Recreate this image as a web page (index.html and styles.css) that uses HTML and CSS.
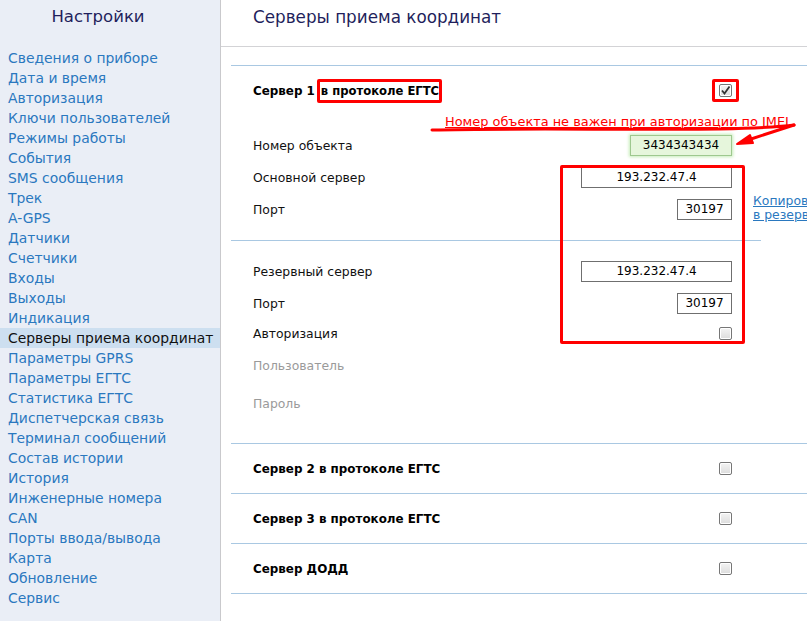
FILE: index.html
```html
<!DOCTYPE html>
<html lang="ru">
<head>
<meta charset="utf-8">
<title>Серверы приема координат</title>
<link rel="stylesheet" href="styles.css">
</head>
<body>
<div class="page">
  <aside class="sidebar">
    <div class="side-title">Настройки</div>
    <nav class="menu">
      <a class="menu-item">Сведения о приборе</a>
      <a class="menu-item">Дата и время</a>
      <a class="menu-item">Авторизация</a>
      <a class="menu-item">Ключи пользователей</a>
      <a class="menu-item">Режимы работы</a>
      <a class="menu-item">События</a>
      <a class="menu-item">SMS сообщения</a>
      <a class="menu-item">Трек</a>
      <a class="menu-item">A-GPS</a>
      <a class="menu-item">Датчики</a>
      <a class="menu-item">Счетчики</a>
      <a class="menu-item">Входы</a>
      <a class="menu-item">Выходы</a>
      <a class="menu-item">Индикация</a>
      <a class="menu-item active">Серверы приема координат</a>
      <a class="menu-item">Параметры GPRS</a>
      <a class="menu-item">Параметры ЕГТС</a>
      <a class="menu-item">Статистика ЕГТС</a>
      <a class="menu-item">Диспетчерская связь</a>
      <a class="menu-item">Терминал сообщений</a>
      <a class="menu-item">Состав истории</a>
      <a class="menu-item">История</a>
      <a class="menu-item">Инженерные номера</a>
      <a class="menu-item">CAN</a>
      <a class="menu-item">Порты ввода/вывода</a>
      <a class="menu-item">Карта</a>
      <a class="menu-item">Обновление</a>
      <a class="menu-item">Сервис</a>
    </nav>
  </aside>

  <main class="main">
    <header class="main-head">
      <h1 class="main-title">Серверы приема координат</h1>
    </header>

    <div class="content">
      <div class="servers">
        <section class="srv srv-open">
          <div class="row head">
            <span class="srv-name">Сервер 1<span class="mark">в протоколе ЕГТС</span></span>
            <span class="mark-box"><span class="cb checked"><svg viewBox="0 0 13 13" width="13" height="13"><path d="M3 6.5 L5.5 9.5 L10.5 2.5" fill="none" stroke="#333" stroke-width="1.8"/></svg></span></span>
          </div>

          <div class="group">
            <div class="rows">
              <div class="row">
                <span class="lbl">Номер объекта</span>
                <span class="inp inp-obj">3434343434</span>
              </div>
              <div class="row">
                <span class="lbl">Основной сервер</span>
                <span class="inp inp-ip">193.232.47.4</span>
              </div>
              <div class="row">
                <span class="lbl">Порт</span>
                <span class="inp inp-port">30197</span>
              </div>
            </div>
            <a class="copy-link">Копировать<br>в резервный</a>
          </div>

          <div class="inner-div"></div>

          <div class="group group-2">
            <div class="rows">
              <div class="row">
                <span class="lbl">Резервный сервер</span>
                <span class="inp inp-ip">193.232.47.4</span>
              </div>
              <div class="row">
                <span class="lbl">Порт</span>
                <span class="inp inp-port">30197</span>
              </div>
              <div class="row row-auth">
                <span class="lbl">Авторизация</span>
                <span class="cb"></span>
              </div>
              <div class="row row-user">
                <span class="lbl lbl-off">Пользователь</span>
              </div>
              <div class="row row-pass">
                <span class="lbl lbl-off">Пароль</span>
              </div>
            </div>
          </div>

          <div class="note">Номер объекта не важен при авторизации по IMEI</div>
          <svg class="note-arrow" width="380" height="40" viewBox="0 0 380 40">
            <path d="M2 19 C 80 17, 200 19, 290 18 C 330 17, 350 16, 364 14" fill="none" stroke="#f00" stroke-width="3" stroke-linecap="round"/>
            <path d="M364 14 L 318 29" fill="none" stroke="#f00" stroke-width="3" stroke-linecap="round"/>
            <path d="M307 33 L 320 24 L 323 32 Z" fill="#f00" stroke="#f00" stroke-width="2" stroke-linejoin="round"/>
          </svg>
          <div class="red-frame"></div>
        </section>

        <section class="srv">
          <div class="row head">
            <span class="srv-name">Сервер 2 в протоколе ЕГТС</span>
            <span class="cb"></span>
          </div>
        </section>

        <section class="srv">
          <div class="row head">
            <span class="srv-name">Сервер 3 в протоколе ЕГТС</span>
            <span class="cb"></span>
          </div>
        </section>

        <section class="srv">
          <div class="row head">
            <span class="srv-name">Сервер ДОДД</span>
            <span class="cb"></span>
          </div>
        </section>
      </div>
    </div>
  </main>
</div>
</body>
</html>
```

FILE: styles.css
```css
* { box-sizing: border-box; }

html, body {
  margin: 0;
  padding: 0;
  width: 807px;
  height: 621px;
  overflow: hidden;
  background: #fff;
  font-family: "DejaVu Sans", Verdana, sans-serif;
}

.page {
  display: flex;
  width: 807px;
  height: 621px;
}

/* Sidebar */
.sidebar {
  flex: 0 0 221px;
  width: 221px;
  background: #eaeef6;
  border-right: 1px solid #c9c9cc;
}

.side-title {
  padding: 7px 24px 0 0;
  line-height: 20px;
  height: 27px;
  margin-bottom: 21px;
  text-align: center;
  font-size: 16.5px;
  color: #1f1f5c;
}

.menu {
  display: flex;
  flex-direction: column;
}

.menu-item {
  display: block;
  height: 20px;
  line-height: 20px;
  padding-left: 8px;
  font-size: 13.9px;
  color: #2a78bf;
  white-space: nowrap;
  text-decoration: none;
}

.menu-item.active {
  background: #cddff0;
  color: #111;
}

/* Main */
.main {
  flex: 1;
  min-width: 0;
}

.main-head {
  height: 47px;
  padding: 7px 0 0 32px;
  border-bottom: 1px solid #d3d3d6;
}

.main-title {
  margin: 0;
  font-weight: normal;
  font-size: 16.8px;
  line-height: 20px;
  color: #1f1f5c;
}

.content {
  padding: 18px 0 0 10px;
}

.servers {
  border-bottom: 1px solid #a9c8e2;
}

.srv {
  position: relative;
  border-top: 1px solid #a9c8e2;
}

.row {
  display: flex;
  align-items: center;
  justify-content: space-between;
  width: 501px;
  height: 32px;
  padding-left: 22px;
  font-size: 12.4px;
  color: #111;
}

.row.head {
  height: 49px;
}

.srv-name {
  font-family: "DejaVu Sans", Verdana, sans-serif;
  font-weight: bold;
  font-size: 11.9px;
  color: #000;
}

.mark {
  display: inline-block;
  border: 3px solid #f00;
  border-radius: 2px;
  padding: 2px 0 2px 1px;
  margin-left: 2px;
  line-height: 14px;
  font-size: 11.6px;
}

.mark-box {
  display: inline-flex;
  border: 3px solid #f00;
  border-radius: 2px;
  padding: 2px 4px;
  margin-right: -7px;
}

.cb {
  display: inline-block;
  width: 13px;
  height: 13px;
  border: 1px solid #767676;
  border-radius: 2px;
  background: linear-gradient(#f4f4f4, #dcdcdc);
  box-shadow: inset 0 0 0 1px #fff;
}

.cb svg {
  display: block;
  margin: -1px;
}

.lbl-off {
  color: #9a9a9a;
}

.inp {
  display: inline-block;
  height: 21px;
  line-height: 19px;
  border: 1px solid #6f6f6f;
  background: #fff;
  text-align: center;
  font-size: 12px;
  color: #000;
}

.inp-obj {
  width: 102px;
  background: #e6f6dc;
  border-color: #9ec88f;
  box-shadow: 0 0 3px 1px #c6ecb8;
}

.inp-ip { width: 151px; }
.inp-port { width: 55px; }

.group {
  display: flex;
  margin-top: 14px;
}

.group-2 {
  margin-top: 14px;
  padding-bottom: 20px;
}

.row-auth { height: 28px; }
.row-user { height: 36px; }
.row-pass { height: 40px; }

.copy-link {
  align-self: flex-end;
  margin: 0 0 3px 21px;
  font-size: 12.4px;
  line-height: 14px;
  color: #2a78bf;
  text-decoration: underline;
  white-space: nowrap;
}

.inner-div {
  width: 530px;
  margin-top: 15px;
  border-top: 1px solid #a9c8e2;
}

/* annotations overlaid on the form */
.note {
  position: absolute;
  left: 214px;
  top: 48px;
  font-size: 12.9px;
  line-height: 16px;
  color: #f00;
  text-decoration: underline;
  white-space: nowrap;
}

.note-arrow {
  position: absolute;
  left: 199px;
  top: 45px;
}

.red-frame {
  position: absolute;
  left: 329px;
  top: 99px;
  width: 185px;
  height: 179px;
  border: 3px solid #f00;
  border-radius: 2px;
}
```
